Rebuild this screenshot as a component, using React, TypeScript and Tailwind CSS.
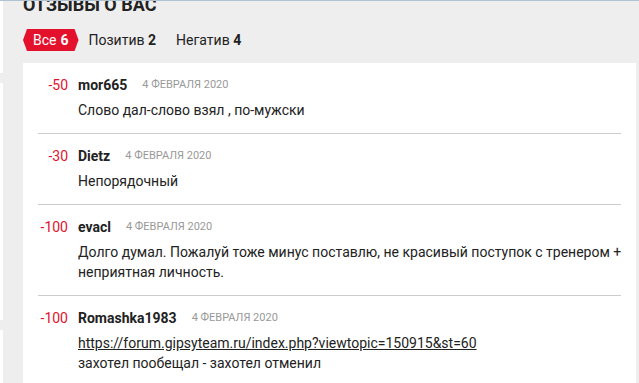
import React from "react";

type Review = {
  score: string;
  name: string;
  date: string;
  lines: { text: string; link?: boolean }[];
};

const reviews: Review[] = [
  { score: "-50", name: "mor665", date: "4 февраля 2020", lines: [{ text: "Слово дал-слово взял , по-мужски" }] },
  { score: "-30", name: "Dietz", date: "4 февраля 2020", lines: [{ text: "Непорядочный" }] },
  {
    score: "-100",
    name: "evacl",
    date: "4 февраля 2020",
    lines: [{ text: "Долго думал. Пожалуй тоже минус поставлю, не красивый поступок с тренером + неприятная личность." }],
  },
  {
    score: "-100",
    name: "Romashka1983",
    date: "4 февраля 2020",
    lines: [
      { text: "https://forum.gipsyteam.ru/index.php?viewtopic=150915&st=60", link: true },
      { text: "захотел пообещал - захотел отменил" },
    ],
  },
];

export default function App() {
  return (
    <div
      className="w-[639px] h-[383px] overflow-hidden bg-[#eeeeee] border-t border-[#b3c2cf] flex text-[#222222]"
      style={{ fontFamily: "Roboto, 'Liberation Sans', sans-serif" }}
    >
      <div className="w-[3px] shrink-0 flex flex-col">
        <div className="h-[72px] bg-white" />
        <div className="h-[10px] bg-[#eeeeee]" />
        <div className="h-[237px] bg-white" />
        <div className="h-[10px] bg-[#eeeeee]" />
        <div className="flex-1 bg-white" />
      </div>
      <div className="flex-1 flex flex-col pl-[20px] pr-[3px] min-w-0">
        <h2 className="mt-[-7px] text-[18px] leading-[22px] font-bold uppercase text-[#222222]">Отзывы о вас</h2>
        <div className="mt-[13px] flex items-center text-[14px] leading-[22px]">
          <div
            className="h-[22px] px-[10px] bg-[#e4112d] text-white flex items-center"
            style={{ clipPath: "polygon(4px 0, calc(100% - 4px) 0, 100% 50%, calc(100% - 4px) 100%, 4px 100%, 0 50%)" }}
          >
            Все <span className="font-bold ml-[4px]">6</span>
          </div>
          <div className="ml-[10px]">
            Позитив <span className="font-bold">2</span>
          </div>
          <div className="ml-[20px]">
            Негатив <span className="font-bold">4</span>
          </div>
        </div>
        <div className="mt-[12px] flex-1 bg-white px-[15px]">
          {reviews.map((r, i) => (
            <div key={i} className="flex pt-[13px] pb-[13px] border-b border-[#cccccc]">
              <div className="w-[30px] shrink-0 text-right text-[14px] leading-[18px] text-[#e4112d]">{r.score}</div>
              <div className="ml-[10px] flex-1 min-w-0">
                <div className="flex items-center h-[18px]">
                  <span className="font-bold text-[14px] leading-[18px] text-[#222222]">{r.name}</span>
                  <span className="ml-[15px] text-[11px] uppercase text-[#999999]">{r.date}</span>
                </div>
                <div className="mt-[6px] mr-[-10px] text-[14px] leading-[20px] text-[#222222]">
                  {r.lines.map((l, j) =>
                    l.link ? (
                      <a key={j} href="#" className="block underline">
                        {l.text}
                      </a>
                    ) : (
                      <div key={j}>{l.text}</div>
                    )
                  )}
                </div>
              </div>
            </div>
          ))}
        </div>
      </div>
    </div>
  );
}
